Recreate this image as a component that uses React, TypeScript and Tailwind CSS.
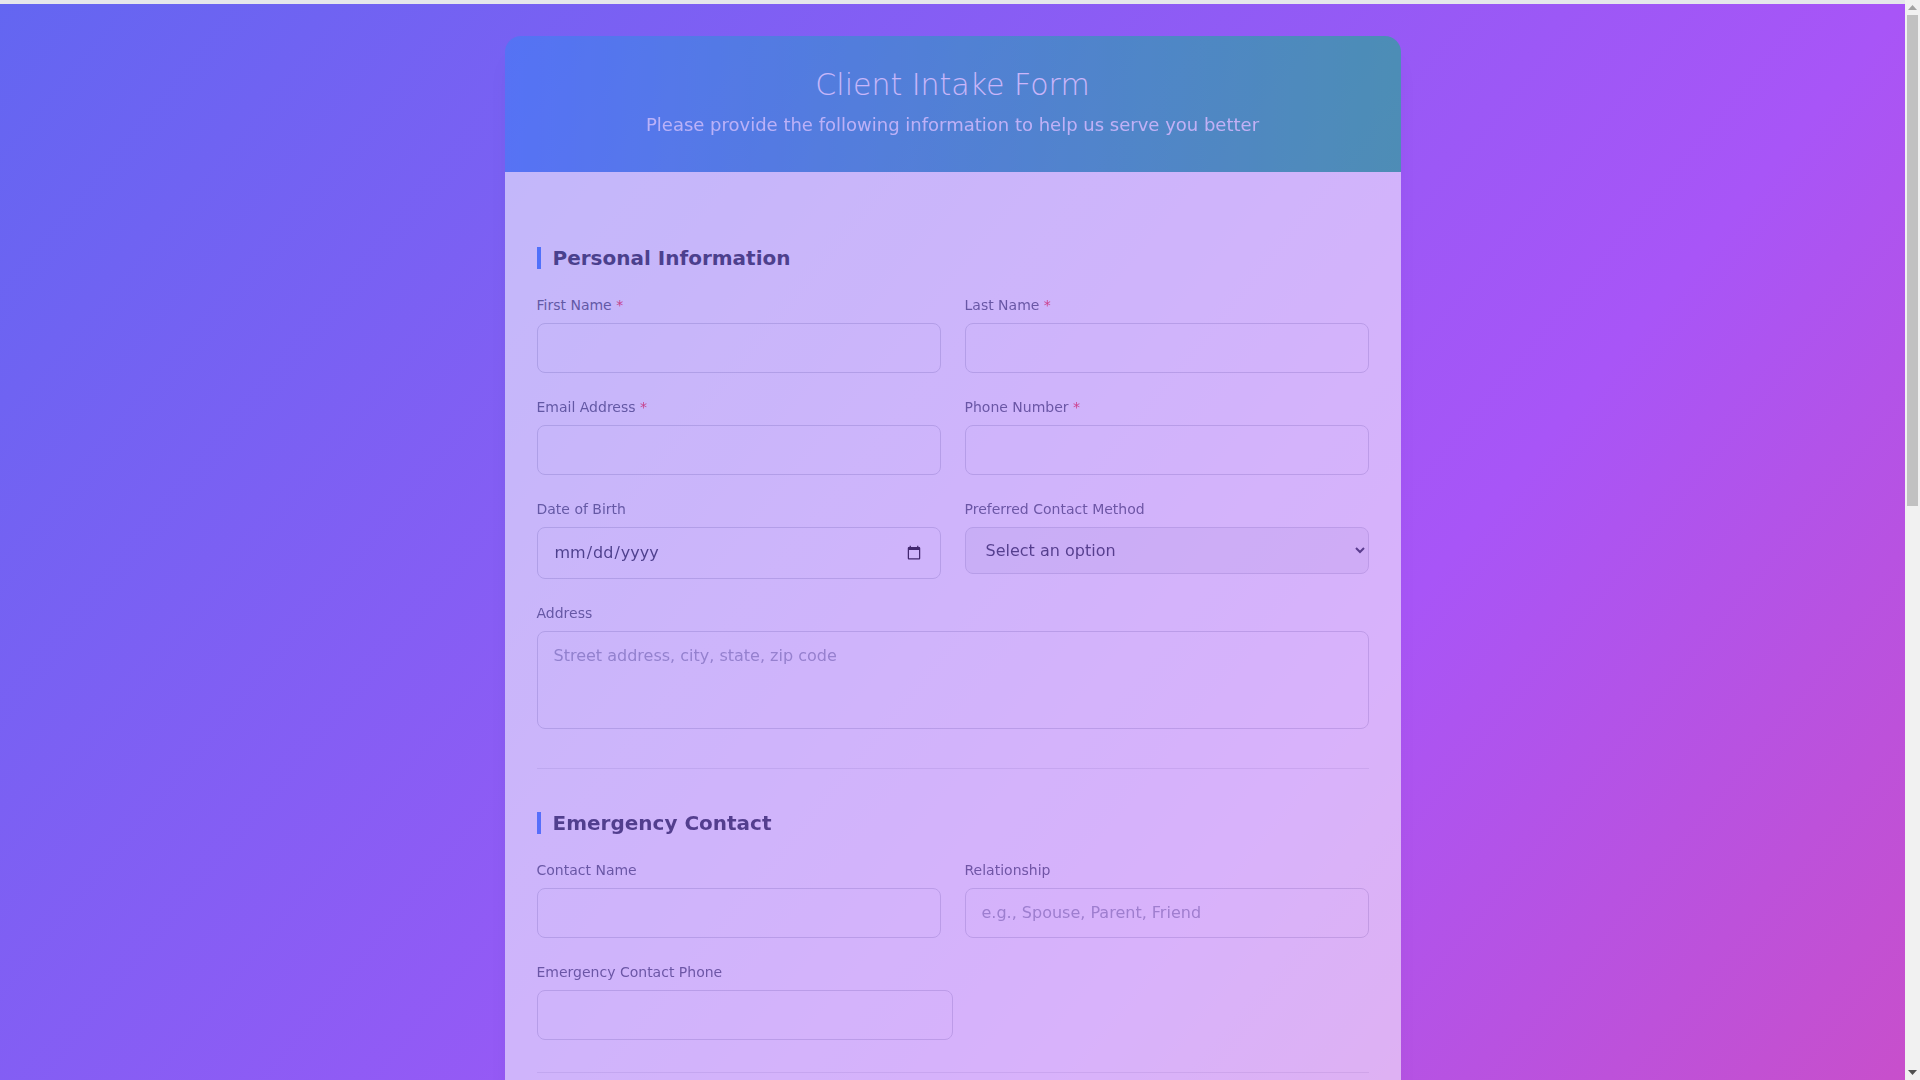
import { useState } from 'react';

interface FieldProps {
  label: string;
  required?: boolean;
  children: React.ReactNode;
  className?: string;
}

const inputClass =
  'w-full px-4 py-3 text-base text-gray-800 bg-white border border-gray-300 rounded-lg outline-none placeholder:text-gray-400 focus:border-blue-500';

const selectClass =
  'w-full px-4 py-3 text-base text-gray-800 bg-gray-100 border border-gray-300 rounded-lg outline-none';

function Field({ label, required, children, className }: FieldProps) {
  return (
    <div className={className}>
      <label className="block text-sm text-gray-600 mb-2">
        {label}
        {required && <span className="text-red-500"> *</span>}
      </label>
      {children}
    </div>
  );
}

function Section({ title, last, children }: { title: string; last?: boolean; children: React.ReactNode }) {
  return (
    <section className={`pt-[43px] pb-8 ${last ? '' : 'border-b border-gray-200'}`}>
      <h2 className="text-xl font-bold text-gray-800 mb-[26px] pl-3 border-l-4 border-blue-500 leading-[22px]">
        {title}
      </h2>
      <div className="space-y-6">{children}</div>
    </section>
  );
}

// classic scrollbar look, the page scroll area itself hides its own
function ScrollRail() {
  return (
    <div className="w-[15px] h-screen shrink-0 bg-[#f1f1f1] flex flex-col items-center">
      <div className="h-[15px] flex items-center justify-center">
        <svg width="9" height="5" viewBox="0 0 9 5">
          <path d="M0 5 L4.5 0 L9 5 Z" fill="#a3a3a3" />
        </svg>
      </div>
      <div className="w-[11px] h-[491px] bg-[#c1c1c1]" />
      <div className="flex-1" />
      <div className="h-[15px] flex items-center justify-center">
        <svg width="9" height="5" viewBox="0 0 9 5">
          <path d="M0 0 L9 0 L4.5 5 Z" fill="#505050" />
        </svg>
      </div>
    </div>
  );
}

export default function App() {
  const [progress] = useState(0);

  return (
    <div className="flex h-screen font-['DejaVu_Sans',sans-serif]">
      <div className="flex-1 min-w-0 overflow-y-auto [scrollbar-width:none]">
        <div className="min-h-full bg-[linear-gradient(to_bottom_right,#6366f1,#a855f7,#ec4899)] px-4 pt-9 pb-10">
          <div className="fixed top-0 left-0 right-[15px] h-1 bg-gray-200 z-50">
            <div className="h-full bg-blue-500" style={{ width: `${progress}%` }} />
          </div>

          <div className="max-w-[896px] mx-auto rounded-2xl overflow-hidden shadow-xl opacity-[0.55]">
            <div className="bg-[linear-gradient(to_right,#3b82f6,#10b981)] text-white text-center pt-[31px] pb-[33px] px-8">
              <h1 className="text-3xl font-light mb-2">Client Intake Form</h1>
              <p className="text-lg opacity-90">Please provide the following information to help us serve you better</p>
            </div>

            <form className="bg-white px-8 pt-8 pb-8" onSubmit={(e) => e.preventDefault()}>
              <Section title="Personal Information">
                <div className="grid grid-cols-2 gap-6">
                  <Field label="First Name" required>
                    <input type="text" className={inputClass} />
                  </Field>
                  <Field label="Last Name" required>
                    <input type="text" className={inputClass} />
                  </Field>
                  <Field label="Email Address" required>
                    <input type="email" className={inputClass} />
                  </Field>
                  <Field label="Phone Number" required>
                    <input type="tel" className={inputClass} />
                  </Field>
                  <Field label="Date of Birth">
                    <input type="date" className={`${inputClass} py-[13px]`} />
                  </Field>
                  <Field label="Preferred Contact Method">
                    <select className={selectClass}>
                      <option>Select an option</option>
                      <option>Email</option>
                      <option>Phone</option>
                      <option>Text Message</option>
                    </select>
                  </Field>
                </div>
                <Field label="Address">
                  <textarea rows={3} placeholder="Street address, city, state, zip code" className={`${inputClass} resize-none`} />
                </Field>
              </Section>

              <Section title="Emergency Contact">
                <div className="grid grid-cols-2 gap-6">
                  <Field label="Contact Name">
                    <input type="text" className={inputClass} />
                  </Field>
                  <Field label="Relationship">
                    <input type="text" placeholder="e.g., Spouse, Parent, Friend" className={inputClass} />
                  </Field>
                </div>
                <Field label="Emergency Contact Phone" className="w-1/2">
                  <input type="tel" className={inputClass} />
                </Field>
              </Section>

              <Section title="Insurance Information">
                <div className="grid grid-cols-2 gap-6">
                  <Field label="Insurance Provider">
                    <input type="text" className={inputClass} />
                  </Field>
                  <Field label="Policy Number">
                    <input type="text" className={inputClass} />
                  </Field>
                  <Field label="Group Number">
                    <input type="text" className={inputClass} />
                  </Field>
                  <Field label="Policy Holder Name">
                    <input type="text" className={inputClass} />
                  </Field>
                </div>
              </Section>

              <Section title="Medical Information">
                <Field label="Current Medications">
                  <textarea rows={3} placeholder="List any medications you are currently taking" className={`${inputClass} resize-none`} />
                </Field>
                <Field label="Allergies">
                  <textarea rows={3} placeholder="List any known allergies" className={`${inputClass} resize-none`} />
                </Field>
              </Section>

              <Section title="Additional Information" last>
                <Field label="Reason for Visit" required>
                  <textarea rows={3} placeholder="Briefly describe the reason for your visit" className={`${inputClass} resize-none`} />
                </Field>
                <Field label="How did you hear about us?" className="w-1/2">
                  <select className={selectClass}>
                    <option>Select an option</option>
                    <option>Referral</option>
                    <option>Online Search</option>
                    <option>Social Media</option>
                  </select>
                </Field>
                <label className="flex items-center gap-3 text-sm text-gray-600">
                  <input type="checkbox" className="h-4 w-4" />
                  I confirm that the information provided is accurate and complete
                </label>
              </Section>

              <div className="flex justify-center pt-2">
                <button type="submit" className="px-10 py-3 text-base font-semibold text-white rounded-lg bg-[linear-gradient(to_right,#3b82f6,#10b981)]">
                  Submit Form
                </button>
              </div>
            </form>
          </div>
        </div>
      </div>
      <ScrollRail />
    </div>
  );
}
